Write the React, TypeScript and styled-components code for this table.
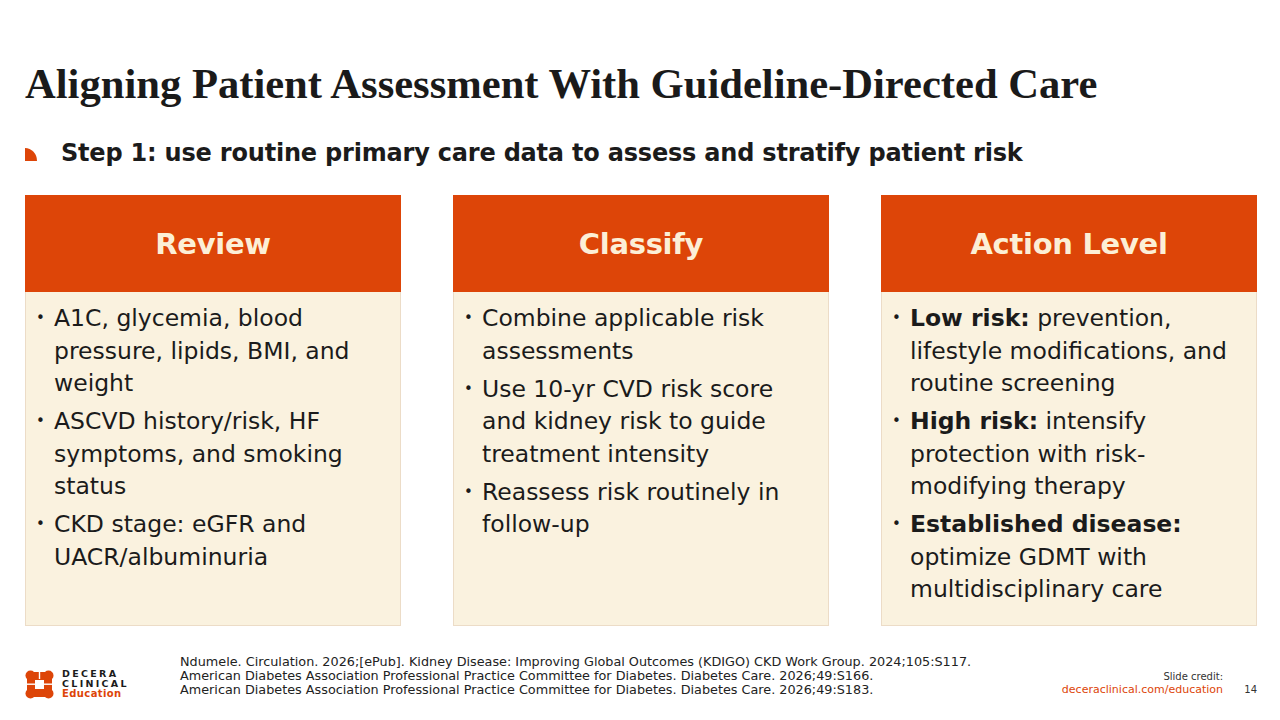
import React from "react";
import styled, { createGlobalStyle } from "styled-components";

const ORANGE = "#DD4508";
const CREAM = "#FAF2DF";

const GlobalStyle = createGlobalStyle`
  html, body {
    margin: 0;
    padding: 0;
    background: #ffffff;
  }
  body {
    font-family: "DejaVu Sans", "Open Sans", sans-serif;
    color: #1b1b1b;
  }
`;

const Slide = styled.div`
  width: 1280px;
  height: 720px;
  box-sizing: border-box;
  padding: 57px 23px 0 25px;
  display: flex;
  flex-direction: column;
  overflow: hidden;
`;

const Title = styled.h1`
  margin: 0;
  font-family: "Liberation Serif", "Times New Roman", serif;
  font-weight: 700;
  font-size: 42.6px;
  line-height: 54px;
  color: #1a1a1a;
`;

const StepRow = styled.div`
  display: flex;
  align-items: center;
  gap: 24px;
  margin-top: 24px;
  height: 36px;
`;

const StepMark = styled.span`
  width: 12px;
  height: 13px;
  background: ${ORANGE};
  border-top-right-radius: 100%;
  flex: none;
  margin-top: 2px;
`;

const StepText = styled.div`
  font-weight: 700;
  font-size: 24px;
  letter-spacing: -0.2px;
`;

const Columns = styled.div`
  display: grid;
  grid-template-columns: repeat(3, 376px);
  column-gap: 52px;
  margin-top: 24px;
`;

const Card = styled.section`
  display: flex;
  flex-direction: column;
  height: 431px;
`;

const CardHead = styled.header`
  height: 97px;
  background: ${ORANGE};
  color: #fcefd6;
  display: flex;
  align-items: center;
  justify-content: center;
  font-weight: 700;
  font-size: 29px;
  letter-spacing: -0.3px;
`;

const CardBody = styled.ul`
  flex: 1;
  margin: 0;
  list-style: none;
  background: ${CREAM};
  border: 1px solid #ecdcc7;
  border-top: none;
  padding: 10px 12px 0 10px;
`;

const Item = styled.li`
  display: flex;
  font-size: 23.5px;
  line-height: 32.5px;
  margin-bottom: 5.5px;
  &::before {
    content: "•";
    width: 18px;
    flex: none;
    text-align: left;
    font-size: 15px;
  }
`;

const Footer = styled.footer`
  display: flex;
  align-items: flex-end;
  margin-top: 29px;
`;

const Logo = styled.div`
  display: flex;
  align-items: center;
  gap: 8px;
  width: 155px;
  margin-bottom: 0;
`;

const LogoWords = styled.div`
  display: flex;
  flex-direction: column;
  font-weight: 700;
  font-size: 9.5px;
  line-height: 10px;
  letter-spacing: 2.3px;
  color: #1b1b1b;
`;

const LogoEdu = styled.span`
  color: ${ORANGE};
  letter-spacing: 0.4px;
  font-size: 10px;
`;

const Refs = styled.div`
  flex: 1;
  font-size: 12.8px;
  line-height: 14px;
  color: #222;
  padding-bottom: 2px;
`;

const Credit = styled.div`
  text-align: right;
  font-size: 10px;
  line-height: 13px;
  color: #333;
  padding-bottom: 3px;
`;

const CreditLink = styled.div`
  color: ${ORANGE};
  font-size: 11px;
`;

const PageNo = styled.div`
  width: 34px;
  text-align: right;
  font-size: 10px;
  color: #333;
  padding-bottom: 4px;
`;

const columns: { title: string; items: React.ReactNode[] }[] = [
  {
    title: "Review",
    items: [
      "A1C, glycemia, blood pressure, lipids, BMI, and weight",
      "ASCVD history/risk, HF symptoms, and smoking status",
      "CKD stage: eGFR and UACR/albuminuria",
    ],
  },
  {
    title: "Classify",
    items: [
      "Combine applicable risk assessments",
      "Use 10-yr CVD risk score and kidney risk to guide treatment intensity",
      "Reassess risk routinely in follow-up",
    ],
  },
  {
    title: "Action Level",
    items: [
      <><b>Low risk:</b> prevention, lifestyle modifications, and routine screening</>,
      <><b>High risk:</b> intensify protection with risk-modifying therapy</>,
      <><b>Established disease:</b> optimize GDMT with multidisciplinary care</>,
    ],
  },
];

function LogoMark() {
  return (
    <svg width="29" height="29" viewBox="0 0 29 29">
      <g fill={ORANGE}>
        <rect x="2" y="2" width="25" height="25" rx="3" />
        <circle cx="5.5" cy="5.5" r="5" />
        <circle cx="23.5" cy="5.5" r="5" />
        <circle cx="5.5" cy="23.5" r="5" />
        <circle cx="23.5" cy="23.5" r="5" />
      </g>
      <rect x="10" y="10" width="9" height="9" fill="#fff" />
      <rect x="0" y="13.5" width="29" height="1.4" fill="#fff" />
      <rect x="13.8" y="0" width="1.4" height="9" fill="#fff" />
    </svg>
  );
}

export default function App() {
  return (
    <>
      <GlobalStyle />
      <Slide>
        <Title>Aligning Patient Assessment With Guideline-Directed Care</Title>
        <StepRow>
          <StepMark />
          <StepText>Step 1: use routine primary care data to assess and stratify patient risk</StepText>
        </StepRow>
        <Columns>
          {columns.map((c) => (
            <Card key={c.title}>
              <CardHead>{c.title}</CardHead>
              <CardBody>
                {c.items.map((it, i) => (
                  <Item key={i}>
                    <span>{it}</span>
                  </Item>
                ))}
              </CardBody>
            </Card>
          ))}
        </Columns>
        <Footer>
          <Logo>
            <LogoMark />
            <LogoWords>
              <span>DECERA</span>
              <span>CLINICAL</span>
              <LogoEdu>Education</LogoEdu>
            </LogoWords>
          </Logo>
          <Refs>
            Ndumele. Circulation. 2026;[ePub]. Kidney Disease: Improving Global Outcomes (KDIGO) CKD Work Group. 2024;105:S117.
            <br />
            American Diabetes Association Professional Practice Committee for Diabetes. Diabetes Care. 2026;49:S166.
            <br />
            American Diabetes Association Professional Practice Committee for Diabetes. Diabetes Care. 2026;49:S183.
          </Refs>
          <Credit>
            Slide credit:
            <CreditLink>deceraclinical.com/education</CreditLink>
          </Credit>
          <PageNo>14</PageNo>
        </Footer>
      </Slide>
    </>
  );
}
